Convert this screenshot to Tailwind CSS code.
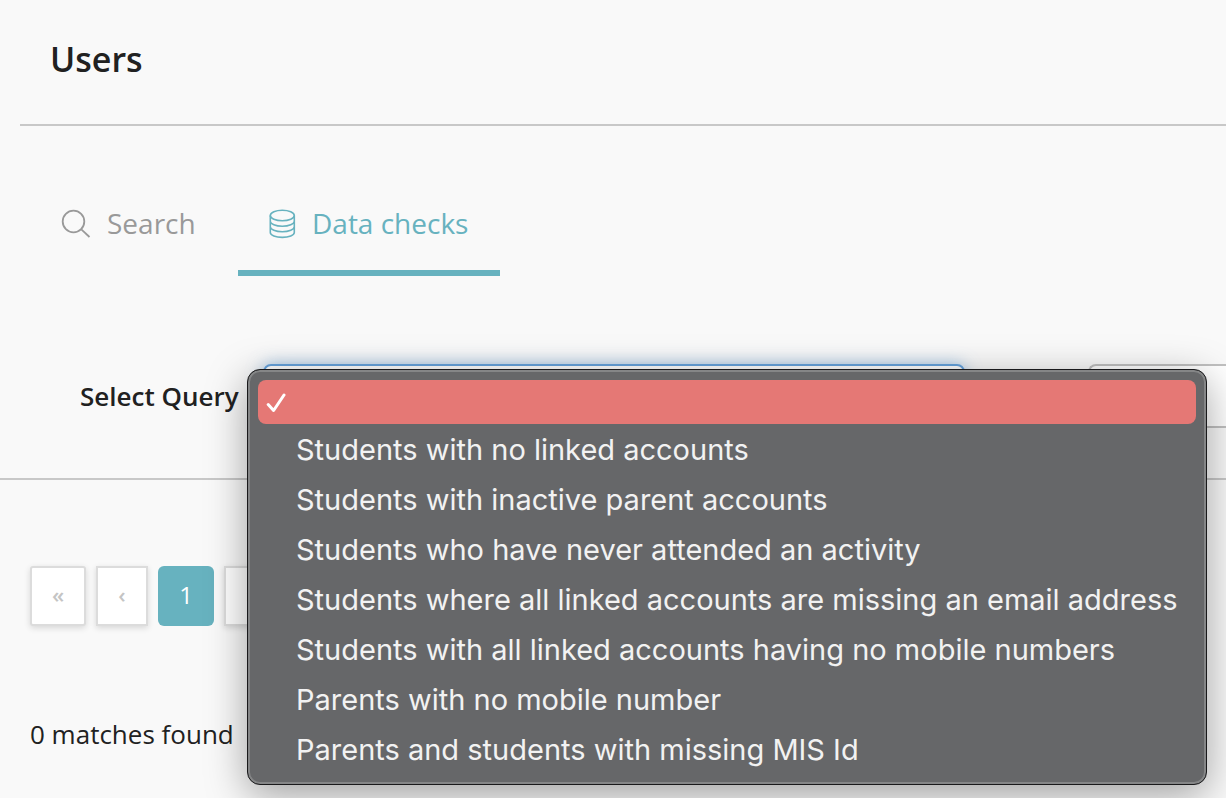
<!DOCTYPE html>
<html lang="en">
<head>
<meta charset="utf-8">
<meta name="viewport" content="width=device-width, initial-scale=1">
<title>Users</title>
<script src="https://cdn.jsdelivr.net/npm/@tailwindcss/browser@4"></script>
</head>
<body class="min-h-screen overflow-hidden bg-[#f9f9f9] font-['Open_Sans',sans-serif] text-[#212121]">
<header class="ml-5 border-b-2 border-[#c8c8c8] pt-[35px] pr-8 pb-[41px] pl-[30px]">
  <h1 class="text-[34px] leading-12 font-semibold">Users</h1>
</header>
<main>
  <nav class="flex pt-[46px] pl-[30px]" aria-label="Users sections">
    <a href="#search" class="flex h-[104px] w-[208px] items-center gap-4 border-b-6 border-transparent pt-1 pl-[31px] text-[28px] text-[#999]">
      <svg class="mt-0.5 size-[30px] shrink-0" viewBox="0 0 30 30" fill="none" stroke="currentColor" stroke-width="1.8" aria-hidden="true"><circle cx="12.5" cy="12.5" r="10.8"/><path d="M20.3 20.3 28.5 28"/></svg>
      Search</a>
    <a href="#checks" aria-current="page" class="flex h-[104px] w-[262px] items-center gap-4 border-b-6 border-[#67b2bf] pt-1 pl-[31px] text-[28px] text-[#67b2bf]">
      <svg class="mt-0.5 h-[30px] w-[27px] shrink-0" viewBox="0 0 27 30" fill="none" stroke="currentColor" stroke-width="1.6" aria-hidden="true"><ellipse cx="13.3" cy="6.5" rx="12" ry="5.3"/><path d="M1.300 6.500v17c0 2.700 5.400 4.900 12 4.900s12-2.200 12-4.900v-17M1.300 12.300c0 2.700 5.400 4.900 12 4.900s12-2.200 12-4.900M1.300 17.800c0 2.700 5.400 4.900 12 4.900s12-2.200 12-4.900"/></svg>
      Data checks</a>
  </nav>
  <form class="flex items-center overflow-visible border-b-2 border-[#c8c8c8] pt-[88px] pb-[50px] pl-20">
    <label for="query" class="w-[183px] shrink-0 text-[26px] leading-10 font-semibold">Select Query</label>
    <div class="relative w-[702px] shrink-0">
      <select id="query" class="block h-16 w-full appearance-none rounded-lg border-2 border-[#66a3dd] bg-white shadow-[0_0_16px_rgba(102,163,221,0.6)] outline-none"><option></option></select>
      <div role="listbox" aria-label="Select Query" class="absolute top-[5px] -left-4 z-10 flex w-[960px] flex-col rounded-[13px] border border-[#19191b] bg-[#666769] px-[10px] pt-[10px] pb-[9px] font-[Inter,sans-serif] text-[29px] text-[#f2f2f2] shadow-[inset_0_0_0_2px_#858687,0_10px_40px_rgba(0,0,0,0.36)]">
        <button type="button" role="option" aria-selected="true" aria-label="No query" class="mb-px flex h-11 items-center rounded-lg bg-[#e57875] pl-2">
          <svg class="h-[22px] w-5" viewBox="0 0 20 22" fill="none" stroke="#fff" stroke-width="3" stroke-linecap="round" stroke-linejoin="round" aria-hidden="true"><path d="m2.200 13.500 5.400 6L18 4"/></svg>
        </button>
        <button type="button" role="option" class="h-[50px] pl-[38px] text-left whitespace-nowrap">Students with no linked accounts</button>
        <button type="button" role="option" class="h-[50px] pl-[38px] text-left whitespace-nowrap">Students with inactive parent accounts</button>
        <button type="button" role="option" class="h-[50px] pl-[38px] text-left whitespace-nowrap">Students who have never attended an activity</button>
        <button type="button" role="option" class="h-[50px] pl-[38px] text-left whitespace-nowrap">Students where all linked accounts are missing an email address</button>
        <button type="button" role="option" class="h-[50px] pl-[38px] text-left whitespace-nowrap">Students with all linked accounts having no mobile numbers</button>
        <button type="button" role="option" class="h-[50px] pl-[38px] text-left whitespace-nowrap">Parents with no mobile number</button>
        <button type="button" role="option" class="h-[50px] pl-[38px] text-left whitespace-nowrap">Parents and students with missing MIS Id</button>
      </div>
    </div>
    <input type="text" aria-label="Filter" class="ml-[123px] h-16 min-w-0 flex-1 rounded-l-lg border-2 border-r-0 border-[#c0c0c0] bg-white px-4 text-[26px]">
  </form>
  <nav class="flex gap-[10px] px-[30px] pt-[86px]" aria-label="Pagination">
    <button type="button" aria-label="First page" class="h-[60px] w-14 rounded-[3px] border-2 border-[#dcdcdc] bg-white pb-1 text-[22px] font-semibold text-[#c4c4c4] shadow-[0_2px_6px_rgba(0,0,0,0.14)]">«</button>
    <button type="button" aria-label="Previous page" class="h-[60px] w-[52px] border-2 border-[#dcdcdc] bg-white pb-1 text-[22px] font-semibold text-[#c4c4c4] shadow-[0_2px_6px_rgba(0,0,0,0.14)]">‹</button>
    <button type="button" aria-current="page" class="h-[60px] w-14 rounded-md bg-[#67b2bf] pb-0.5 text-2xl font-medium text-white">1</button>
    <button type="button" aria-label="Next page" class="h-[60px] w-[52px] border-2 border-[#dcdcdc] bg-white pb-1 text-[22px] font-semibold text-[#c4c4c4] shadow-[0_2px_6px_rgba(0,0,0,0.14)]">›</button>
  </nav>
  <p class="px-[30px] pt-[88px] text-[26px] leading-10">0 matches found</p>
</main>
</body>
</html>
